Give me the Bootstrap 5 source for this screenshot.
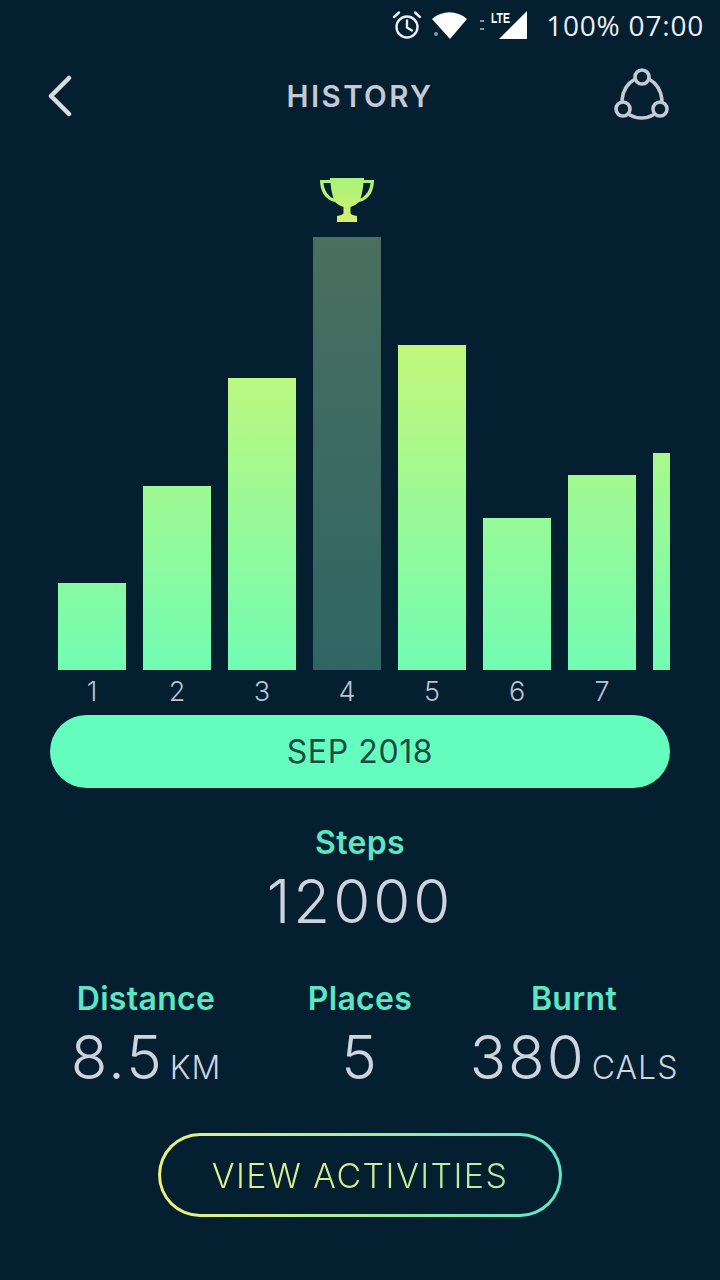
<!DOCTYPE html>
<html>
<head>
  <meta charset="UTF-8">
  <title>History</title>
  <meta name="viewport" content="width=device-width, initial-scale=1">
  <link href="https://cdn.jsdelivr.net/npm/bootstrap@5.3.3/dist/css/bootstrap.min.css" rel="stylesheet">
  <style>
    body { background-color: #031f30; font-family: "Inter", "Liberation Sans", sans-serif; color: #cfd3de; width: 720px; height: 1280px; overflow: hidden; }
    .status-row { height: 50px; padding-right: 16px; }
    .status-text { font-size: 28px; color: #eceef2; font-family: "Open Sans", sans-serif; margin-left: 19px; letter-spacing: .8px; }
    .alarm-icon { margin-right: -3px; }
    .wifi-icon { margin: 0 11px 0 13px; }
    .head-row { height: 92px; padding: 0 50px; }
    .head-side { flex: 1 1 0; }
    .back-icon { margin-left: -4px; }
    .head-title { font-size: 29.5px; font-weight: 600; color: #c4c9d3; letter-spacing: 2.4px; }
    .chart-wrap { height: 528px; margin: 0 50px 0 58px; overflow: hidden; gap: 17px; }
    .bar-col { flex: 0 0 68px; }
    .bar-fill { width: 68px; background: linear-gradient(to top, #72fcb2, #def567) bottom / 100% 433px no-repeat; }
    .bar-dim { background: linear-gradient(to bottom, #4a6f5f, #2f6664); }
    .cup-icon { margin-bottom: 15px; }
    .day-row { margin: 0 50px 0 58px; gap: 17px; height: 45px; overflow: hidden; }
    .day-num { flex: 0 0 68px; text-align: center; font-size: 27px; font-weight: 300; color: #bcc3d0; line-height: 44px; }
    .month-pill { margin: 0 50px; height: 73px; background: #64fdbe; border-radius: 37px; color: #1c4a47; font-size: 32px; font-weight: 400; letter-spacing: .6px; }
    .steps-box { margin-top: 37px; }
    .stat-label { color: #5ce6c4; font-size: 32px; font-weight: 600; line-height: 36px; letter-spacing: .3px; }
    .steps-value { font-size: 60px; font-weight: 300; line-height: 70px; margin-top: 5px; letter-spacing: 3px; }
    .stat-row { margin-top: 45px; }
    .stat-one { width: 214px; flex: none; }
    .stat-value { font-size: 60px; font-weight: 300; line-height: 70px; margin-top: 5px; white-space: nowrap; letter-spacing: 2px; }
    .stat-unit { font-size: 32px; font-weight: 300; margin-left: 6px; letter-spacing: 1px; }
    .act-btn { width: 404px; height: 84px; border: 3px solid transparent; border-radius: 42px; margin-top: 30px;
      background: linear-gradient(#031f30, #031f30) padding-box, linear-gradient(to right, #f0f07c, #5de6c6) border-box; }
    .act-text { font-size: 34px; font-weight: 300; letter-spacing: 1.4px; color: transparent;
      background: linear-gradient(to right, #e4f08a, #b6eba2); -webkit-background-clip: text; background-clip: text; }
  </style>
</head>
<body>
  <div class="d-flex align-items-center justify-content-end status-row">
    <svg class="alarm-icon" width="30" height="30" viewBox="0 0 30 30" fill="none" stroke="#eceef2" stroke-width="2.4">
      <circle cx="15" cy="17" r="10.5"/>
      <path d="M15 10.500v7l5 3M2 7l5-4.500M28 7l-5-4.500" stroke-linecap="round"/>
    </svg>
    <svg class="wifi-icon" width="35" height="30" viewBox="0 0 35 30">
      <path d="M0 9C10 0 25 0 35 9L18 29Z" fill="#fff"/>
      <circle cx="4" cy="24" r="2" fill="#8a98a3"/>
    </svg>
    <svg width="49" height="30" viewBox="0 0 49 30">
      <path d="M49 1V29H21Z" fill="#fff"/>
      <rect x="2" y="10" width="4" height="2" fill="#8a98a3"/>
      <rect x="2" y="18" width="4" height="2" fill="#8a98a3"/>
      <text x="13" y="13" font-size="14" font-weight="700" fill="#fff" stroke="#031f30" stroke-width="1.500" paint-order="stroke" font-family="Liberation Sans Narrow, Liberation Sans, sans-serif" textLength="19" lengthAdjust="spacingAndGlyphs">LTE</text>
    </svg>
    <span class="status-text">100% 07:00</span>
  </div>

  <div class="d-flex align-items-center justify-content-between head-row">
    <div class="head-side">
      <svg class="d-block back-icon" width="28" height="42" viewBox="0 0 28 42" fill="none" stroke="#d9dde6" stroke-width="4.500" stroke-linecap="round" stroke-linejoin="round">
        <path d="M23 3 5 21l18 18"/>
      </svg>
    </div>
    <span class="head-title">HISTORY</span>
    <div class="head-side d-flex justify-content-end">
      <svg class="d-block" width="56" height="56" viewBox="0 0 56 56" fill="none" stroke="#c4c9d3" stroke-width="3.600" stroke-linecap="round">
        <circle cx="28" cy="9" r="7"/>
        <circle cx="9" cy="41" r="7"/>
        <circle cx="46" cy="41" r="7"/>
        <path d="M21 11C14 15 9 22 8 32M35 11C42 15 47 22 48 32M16 47C23 51 32 51 39 47"/>
      </svg>
    </div>
  </div>

  <div class="d-flex align-items-end chart-wrap">
    <div class="bar-col"><div class="bar-fill" style="height:87px"></div></div>
    <div class="bar-col"><div class="bar-fill" style="height:184px"></div></div>
    <div class="bar-col"><div class="bar-fill" style="height:292px"></div></div>
    <div class="bar-col d-flex flex-column align-items-center">
      <svg class="cup-icon" width="54" height="45" viewBox="0 0 54 45">
        <defs><linearGradient id="cupGrad" x1="0" y1="0" x2="0" y2="1"><stop offset="0" stop-color="#a6f47c"/><stop offset="1" stop-color="#d6f06e"/></linearGradient></defs>
        <path fill="url(#cupGrad)" fill-rule="evenodd" d="M10 1H44V3H54C54 14 49 23 39 25C36 28 33 29 30.500 30V36C31 38 34 38 37 39V45H17V39C20 38 23 38 23.500 36V30C21 29 18 28 15 25C5 23 0 14 0 3H10ZM3.500 6C4 13 8 19 13.500 21.500C12 17 11 12 10.500 6ZM50.500 6H43.500C43 12 42 17 40.500 21.500C46 19 50 13 50.500 6Z"/>
      </svg>
      <div class="bar-fill bar-dim" style="height:433px"></div>
    </div>
    <div class="bar-col"><div class="bar-fill" style="height:325px"></div></div>
    <div class="bar-col"><div class="bar-fill" style="height:152px"></div></div>
    <div class="bar-col"><div class="bar-fill" style="height:195px"></div></div>
    <div class="bar-col"><div class="bar-fill" style="height:217px"></div></div>
  </div>

  <div class="d-flex day-row">
    <span class="day-num">1</span>
    <span class="day-num">2</span>
    <span class="day-num">3</span>
    <span class="day-num">4</span>
    <span class="day-num">5</span>
    <span class="day-num">6</span>
    <span class="day-num">7</span>
  </div>

  <div class="d-flex align-items-center justify-content-center month-pill">SEP 2018</div>

  <div class="text-center steps-box">
    <div class="stat-label">Steps</div>
    <div class="steps-value">12000</div>
  </div>

  <div class="d-flex justify-content-center stat-row">
    <div class="stat-one d-flex flex-column align-items-center">
      <div class="stat-label">Distance</div>
      <div class="stat-value">8.5<span class="stat-unit">KM</span></div>
    </div>
    <div class="stat-one d-flex flex-column align-items-center">
      <div class="stat-label">Places</div>
      <div class="stat-value">5</div>
    </div>
    <div class="stat-one d-flex flex-column align-items-center">
      <div class="stat-label">Burnt</div>
      <div class="stat-value">380<span class="stat-unit">CALS</span></div>
    </div>
  </div>

  <div class="d-flex justify-content-center">
    <div class="act-btn d-flex align-items-center justify-content-center"><span class="act-text">VIEW ACTIVITIES</span></div>
  </div>

  <script src="https://cdn.jsdelivr.net/npm/bootstrap@5.3.3/dist/js/bootstrap.bundle.min.js"></script>
</body>
</html>
